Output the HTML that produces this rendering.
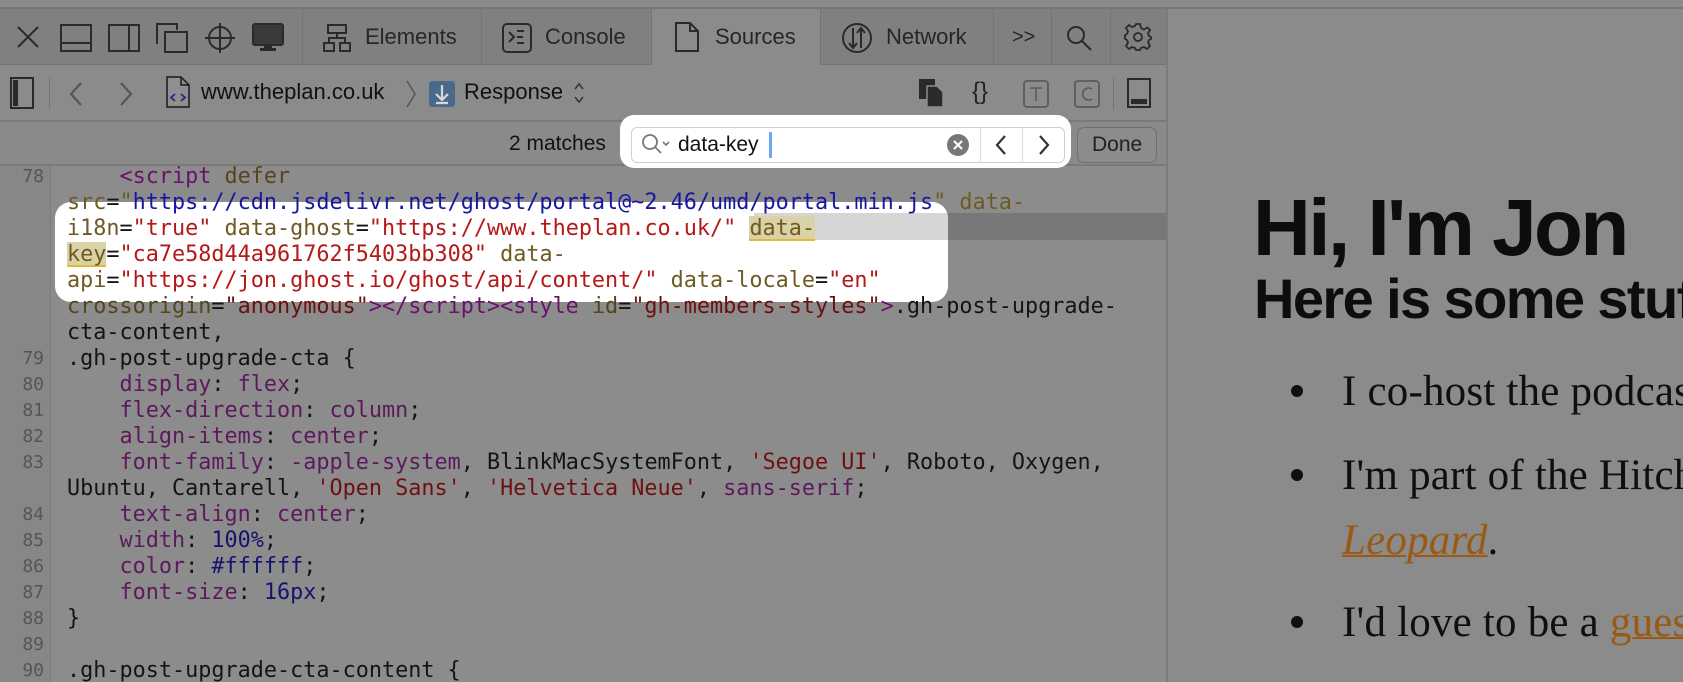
<!DOCTYPE html>
<html><head><meta charset="utf-8"><style>
*{margin:0;padding:0;box-sizing:border-box}
body{width:1683px;height:682px;overflow:hidden;background:#8b8b8b;position:relative;font-family:"Liberation Sans",sans-serif;color:#1e1e1e}
.abs{position:absolute}
.topstrip{left:0;top:0;width:1683px;height:9px;background:#8a8a8a;border-bottom:2px solid #777}
.tabbar{left:0;top:9px;width:1168px;height:56px;background:#808080;border-bottom:1px solid #747474}
.bar2{left:0;top:65px;width:1168px;height:57px;background:#8b8b8b;border-bottom:2px solid #7a7a7a}
.bar3{left:0;top:122px;width:1168px;height:44px;background:#8a8a8a;border-bottom:2px solid #7a7a7a}
.vdiv{position:absolute;width:1px;background:#747474}
.lbl{position:absolute;font-size:22px;color:#262626;line-height:26px;white-space:nowrap}
.panel-edge{left:1166px;top:9px;width:2px;height:673px;background:#7c7c7c}
.code{left:0;top:166px;width:1166px;height:516px;background:#8c8c8c;overflow:hidden}
.gutter{left:0;top:0;width:51px;height:520px;background:#878787;border-right:1px solid #7c7c7c}
.rows{position:absolute;left:0;top:-2px;width:1166px;font-family:"DejaVu Sans Mono",monospace;font-size:21.8px;line-height:26px;color:#141414}
.row{height:26px;position:relative}
.ln{position:absolute;left:0;width:44px;text-align:right;font-size:18px;color:#555;font-family:"DejaVu Sans Mono",monospace}
.tx{position:absolute;left:67px;white-space:pre}
.t{color:#6a126a}.a{color:#6e5a22}.s{color:#b41818}.u{color:#1616a0}.p{color:#5c1a5c}.n{color:#14146e}.q{color:#6e1010}
.dim .a{color:#54461c}.dim .s{color:#6b0f0f}.dim .u{color:#10108a}
.m{background:#d9d2a6;box-shadow:inset 0 -2px 0 #e2b83a}
h1{position:absolute;left:1253px;top:180px;font-size:80px;font-weight:bold;letter-spacing:-2.5px;color:#0c0d0f;white-space:nowrap;line-height:96px}
h2{position:absolute;left:1254px;top:266px;font-size:56px;font-weight:bold;letter-spacing:-1.6px;color:#0c0d0f;white-space:nowrap;line-height:66px}
.li{position:absolute;left:1342px;font-family:"Liberation Serif",serif;font-size:43px;letter-spacing:0.2px;color:#0e0f11;white-space:nowrap;line-height:48px}
.bul{position:absolute;left:1291px;width:12px;height:12px;border-radius:50%;background:#0e0f11}
.lnk{color:#9a5a14;text-decoration:underline;text-decoration-thickness:2px}
svg{position:absolute}
</style></head><body>
<div class="abs topstrip"></div>
<div class="abs tabbar">
  <svg style="left:16px;top:16px" width="24" height="24" viewBox="0 0 24 24"><path d="M2 2L22 22M22 2L2 22" stroke="#2a2a2a" stroke-width="2"/></svg>
  <svg style="left:60px;top:15px" width="32" height="28" viewBox="0 0 32 28"><rect x="1" y="1" width="30" height="26" fill="none" stroke="#2a2a2a" stroke-width="2"/><path d="M1 19H31" stroke="#2a2a2a" stroke-width="2"/></svg>
  <svg style="left:108px;top:15px" width="32" height="28" viewBox="0 0 32 28"><rect x="1" y="1" width="30" height="26" fill="none" stroke="#2a2a2a" stroke-width="2"/><path d="M21 1V27" stroke="#2a2a2a" stroke-width="2"/></svg>
  <svg style="left:156px;top:14px" width="32" height="30" viewBox="0 0 32 30"><path d="M1 21V1H21V7" fill="none" stroke="#2a2a2a" stroke-width="2"/><rect x="9" y="9" width="22" height="20" fill="none" stroke="#2a2a2a" stroke-width="2"/></svg>
  <svg style="left:204px;top:13px" width="32" height="32" viewBox="0 0 32 32"><circle cx="16" cy="16" r="11" fill="none" stroke="#2a2a2a" stroke-width="2"/><path d="M16 1V31M1 16H31" stroke="#2a2a2a" stroke-width="2"/></svg>
  <svg style="left:252px;top:14px" width="32" height="30" viewBox="0 0 32 30"><rect x="1" y="1" width="30" height="21" rx="2" fill="#3a3a3a" stroke="#2a2a2a" stroke-width="2"/><rect x="12" y="22" width="8" height="4" fill="#2a2a2a"/><rect x="8" y="25" width="16" height="3" fill="#2a2a2a"/></svg>
  <div class="vdiv" style="left:302px;top:0;height:56px"></div>
  <svg style="left:323px;top:15px" width="28" height="28" viewBox="0 0 28 28"><rect x="5" y="1" width="18" height="8" fill="none" stroke="#2a2a2a" stroke-width="2"/><rect x="1" y="19" width="10" height="8" fill="none" stroke="#2a2a2a" stroke-width="2"/><rect x="17" y="19" width="10" height="8" fill="none" stroke="#2a2a2a" stroke-width="2"/><path d="M14 9V14M6 19V14H22V19" fill="none" stroke="#2a2a2a" stroke-width="2"/></svg>
  <div class="lbl" style="left:365px;top:15px">Elements</div>
  <div class="vdiv" style="left:481px;top:0;height:56px"></div>
  <svg style="left:502px;top:14px" width="30" height="30" viewBox="0 0 30 30"><rect x="1" y="1" width="28" height="28" rx="4" fill="none" stroke="#2a2a2a" stroke-width="2"/><path d="M7 9L12 14L7 19M15 8H22M15 14H21M15 20H22" fill="none" stroke="#2a2a2a" stroke-width="2"/></svg>
  <div class="lbl" style="left:545px;top:15px">Console</div>
  <div class="abs" style="left:651px;top:0;width:170px;height:56px;background:#8b8b8b;border-left:1px solid #747474;border-right:1px solid #747474"></div>
  <svg style="left:675px;top:13px" width="24" height="30" viewBox="0 0 24 30"><path d="M1 1H15L23 9V29H1Z M15 1V9H23" fill="none" stroke="#2a2a2a" stroke-width="2"/></svg>
  <div class="lbl" style="left:715px;top:15px">Sources</div>
  <svg style="left:841px;top:13px" width="32" height="32" viewBox="0 0 32 32"><circle cx="16" cy="16" r="14" fill="none" stroke="#2a2a2a" stroke-width="2"/><path d="M12 6V26M8 21L12 26L16 21M20 26V6M16 11L20 6L24 11" fill="none" stroke="#2a2a2a" stroke-width="2"/></svg>
  <div class="lbl" style="left:886px;top:15px">Network</div>
  <div class="vdiv" style="left:993px;top:0;height:56px"></div>
  <div class="lbl" style="left:1012px;top:15px;font-size:20px">&gt;&gt;</div>
  <div class="vdiv" style="left:1051px;top:0;height:56px"></div>
  <svg style="left:1066px;top:16px" width="26" height="26" viewBox="0 0 26 26"><circle cx="10" cy="10" r="8" fill="none" stroke="#2a2a2a" stroke-width="2"/><path d="M16 16L25 25" stroke="#2a2a2a" stroke-width="2"/></svg>
  <div class="vdiv" style="left:1110px;top:0;height:56px"></div>
  <svg style="left:1124px;top:14px" width="28" height="28" viewBox="0 0 28 28"><path d="M12 1H16L17 5L20 6.5L23.5 4.5L26 7L24 10.5L25 13L27 14L27 16L25 17L24 19.5L26 23L23 26L20 24L17 25L16 27H12L11 25L8 24L5 26L2 23L4 19.5L3 17L1 16V12L3 11L4 8.5L2 5L5 2L8 4L11 3Z" fill="none" stroke="#2a2a2a" stroke-width="1.8"/><circle cx="14" cy="14" r="4" fill="none" stroke="#2a2a2a" stroke-width="1.8"/></svg>
</div>
<div class="abs bar2">
  <svg style="left:10px;top:12px" width="24" height="32" viewBox="0 0 24 32"><rect x="1" y="1" width="22" height="30" fill="none" stroke="#2a2a2a" stroke-width="2"/><rect x="3" y="3" width="5" height="26" fill="#2a2a2a"/></svg>
  <div class="vdiv" style="left:49px;top:12px;height:32px"></div>
  <svg style="left:68px;top:16px" width="16" height="26" viewBox="0 0 16 26"><path d="M13 2L3 13L13 24" fill="none" stroke="#555" stroke-width="2.2"/></svg>
  <svg style="left:118px;top:16px" width="16" height="26" viewBox="0 0 16 26"><path d="M3 2L13 13L3 24" fill="none" stroke="#555" stroke-width="2.2"/></svg>
  <svg style="left:166px;top:11px" width="24" height="32" viewBox="0 0 24 32"><path d="M1 1H15L23 9V31H1Z M15 1V9H23" fill="#8f8f8f" stroke="#1a1a1a" stroke-width="1.5"/><path d="M9 18L5 21.5L9 25M15 18L19 21.5L15 25" fill="none" stroke="#1a2a90" stroke-width="1.8"/></svg>
  <div class="lbl" style="left:201px;top:14px;color:#111">www.theplan.co.uk</div>
  <svg style="left:405px;top:14px" width="12" height="30" viewBox="0 0 12 30"><path d="M2 2L10 15L2 28" fill="none" stroke="#555" stroke-width="1.5"/></svg>
  <svg style="left:429px;top:16px" width="26" height="26" viewBox="0 0 26 26"><rect x="0" y="0" width="26" height="26" rx="3" fill="#4a6a8c"/><path d="M13 4V19M7 13L13 19L19 13M7 22H19" fill="none" stroke="#d8d8d8" stroke-width="2.2"/></svg>
  <div class="lbl" style="left:464px;top:14px;color:#111">Response</div>
  <svg style="left:573px;top:17px" width="12" height="22" viewBox="0 0 12 22"><path d="M2 7L6 2L10 7M2 15L6 20L10 15" fill="none" stroke="#333" stroke-width="1.5"/></svg>
  <svg style="left:918px;top:13px" width="26" height="30" viewBox="0 0 26 30"><rect x="1" y="1" width="16" height="20" fill="#2a2a2a"/><path d="M9 8H19L25 14V29H9Z" fill="#2a2a2a" stroke="#8b8b8b" stroke-width="1.5"/></svg>
  <div class="lbl" style="left:972px;top:14px;font-size:24px;color:#222">{}</div>
  <svg style="left:1023px;top:15px" width="26" height="28" viewBox="0 0 26 28"><rect x="1" y="1" width="24" height="26" rx="3" fill="none" stroke="#5a5a5a" stroke-width="1.8"/><path d="M7 8H19M13 8V21" stroke="#5a5a5a" stroke-width="1.6"/></svg>
  <svg style="left:1074px;top:15px" width="26" height="28" viewBox="0 0 26 28"><rect x="1" y="1" width="24" height="26" rx="3" fill="none" stroke="#5a5a5a" stroke-width="1.8"/><path d="M18 9A6 6 0 1 0 18 19" fill="none" stroke="#5a5a5a" stroke-width="1.6"/></svg>
  <div class="vdiv" style="left:1113px;top:13px;height:32px"></div>
  <svg style="left:1127px;top:13px" width="24" height="30" viewBox="0 0 24 30"><rect x="1" y="1" width="22" height="28" fill="none" stroke="#2a2a2a" stroke-width="2"/><rect x="4" y="21" width="16" height="5" fill="#2a2a2a"/></svg>
</div>
<div class="abs bar3">
  <div class="lbl" style="left:509px;top:9px;color:#111;font-size:21px">2 matches</div>
  <div class="abs" style="left:1077px;top:5px;width:80px;height:36px;border:1px solid #6f6f6f;border-radius:7px;background:#8c8c8c"></div>
  <div class="lbl" style="left:1092px;top:10px;font-size:21px;color:#222">Done</div>
</div>
<div class="abs panel-edge"></div>

<div class="abs code">
  <div class="abs gutter"></div>
  <div class="abs" style="left:754px;top:47px;width:412px;height:27px;background:#787878"></div>
  <div class="abs" style="left:55px;top:36px;width:893px;height:100px;background:#fff;border-radius:16px;overflow:hidden">
    <div class="abs" style="left:699px;top:11px;width:200px;height:27px;background:#d6d6d6"></div>
  </div>
  <div class="rows">
    <div class="row dim"><span class="ln">78</span><span class="tx">    <span class="t">&lt;script</span> <span class="a">defer</span></span></div>
    <div class="row"><span class="ln"></span><span class="tx"><span class="a">src</span>=<span class="a">"</span><span class="u">https://cdn.jsdelivr.net/ghost/portal@~2.46/umd/portal.min.js</span><span class="a">"</span> <span class="a">data-</span></span></div>
    <div class="row"><span class="ln"></span><span class="tx"><span class="a">i18n</span>=<span class="s">"true"</span> <span class="a">data-ghost</span>=<span class="s">"https://www.theplan.co.uk/"</span> <span class="a m">data-</span></span></div>
    <div class="row"><span class="ln"></span><span class="tx"><span class="a m">key</span>=<span class="s">"ca7e58d44a961762f5403bb308"</span> <span class="a">data-</span></span></div>
    <div class="row"><span class="ln"></span><span class="tx"><span class="a">api</span>=<span class="s">"https://jon.ghost.io/ghost/api/content/"</span> <span class="a">data-locale</span>=<span class="s">"en"</span></span></div>
    <div class="row dim"><span class="ln"></span><span class="tx"><span class="a">crossorigin</span>=<span class="s">"anonymous"</span><span class="t">&gt;&lt;/script&gt;&lt;style</span> <span class="a">id</span>=<span class="s">"gh-members-styles"</span><span class="t">&gt;</span>.gh-post-upgrade-</span></div>
    <div class="row"><span class="ln"></span><span class="tx">cta-content,</span></div>
    <div class="row"><span class="ln">79</span><span class="tx">.gh-post-upgrade-cta {</span></div>
    <div class="row"><span class="ln">80</span><span class="tx">    <span class="p">display</span>: <span class="p">flex</span>;</span></div>
    <div class="row"><span class="ln">81</span><span class="tx">    <span class="p">flex-direction</span>: <span class="p">column</span>;</span></div>
    <div class="row"><span class="ln">82</span><span class="tx">    <span class="p">align-items</span>: <span class="p">center</span>;</span></div>
    <div class="row"><span class="ln">83</span><span class="tx">    <span class="p">font-family</span>: <span class="p">-apple-system</span>, BlinkMacSystemFont, <span class="q">'Segoe UI'</span>, Roboto, Oxygen,</span></div>
    <div class="row"><span class="ln"></span><span class="tx">Ubuntu, Cantarell, <span class="q">'Open Sans'</span>, <span class="q">'Helvetica Neue'</span>, <span class="p">sans-serif</span>;</span></div>
    <div class="row"><span class="ln">84</span><span class="tx">    <span class="p">text-align</span>: <span class="p">center</span>;</span></div>
    <div class="row"><span class="ln">85</span><span class="tx">    <span class="p">width</span>: <span class="n">100%</span>;</span></div>
    <div class="row"><span class="ln">86</span><span class="tx">    <span class="p">color</span>: <span class="n">#ffffff</span>;</span></div>
    <div class="row"><span class="ln">87</span><span class="tx">    <span class="p">font-size</span>: <span class="n">16px</span>;</span></div>
    <div class="row"><span class="ln">88</span><span class="tx">}</span></div>
    <div class="row"><span class="ln">89</span><span class="tx"></span></div>
    <div class="row"><span class="ln">90</span><span class="tx">.gh-post-upgrade-cta-content {</span></div>
  </div>
</div>

<div class="abs" style="left:620px;top:115px;width:451px;height:53px;background:#fff;border-radius:14px"></div>
<div class="abs" style="left:631px;top:127px;width:434px;height:36px;border:1px solid #d0d0d0;border-radius:6px;background:#fff"></div>
<svg style="left:641px;top:133px" width="32" height="24" viewBox="0 0 32 24"><circle cx="9" cy="9" r="7" fill="none" stroke="#777" stroke-width="1.8"/><path d="M14 14L20 20M22 9L25 12L28 9" fill="none" stroke="#777" stroke-width="1.6"/></svg>
<div class="lbl" style="left:678px;top:132px;color:#111;font-size:21px">data-key</div>
<div class="abs" style="left:769px;top:132px;width:3px;height:26px;background:#6ea8f0"></div>
<svg style="left:947px;top:134px" width="22" height="22" viewBox="0 0 22 22"><circle cx="11" cy="11" r="11" fill="#777"/><path d="M7 7L15 15M15 7L7 15" stroke="#fff" stroke-width="2"/></svg>
<div class="abs" style="left:980px;top:128px;width:1px;height:34px;background:#ddd"></div>
<svg style="left:993px;top:134px" width="16" height="22" viewBox="0 0 16 22"><path d="M12 2L4 11L12 20" fill="none" stroke="#333" stroke-width="2.2"/></svg>
<div class="abs" style="left:1022px;top:128px;width:1px;height:34px;background:#ddd"></div>
<svg style="left:1036px;top:134px" width="16" height="22" viewBox="0 0 16 22"><path d="M4 2L12 11L4 20" fill="none" stroke="#333" stroke-width="2.2"/></svg>

<h1>Hi, I'm Jon</h1>
<h2>Here is some stuff</h2>
<div class="bul" style="top:385px"></div>
<div class="li" style="top:368px">I co-host the podcast The Plan</div>
<div class="bul" style="top:469px"></div>
<div class="li" style="top:452px">I'm part of the Hitchhikers team</div>
<div class="li" style="top:517px"><i class="lnk">Leopard</i>.</div>
<div class="bul" style="top:616px"></div>
<div class="li" style="top:599px">I'd love to be a <span class="lnk">guest</span></div>
</body></html>
